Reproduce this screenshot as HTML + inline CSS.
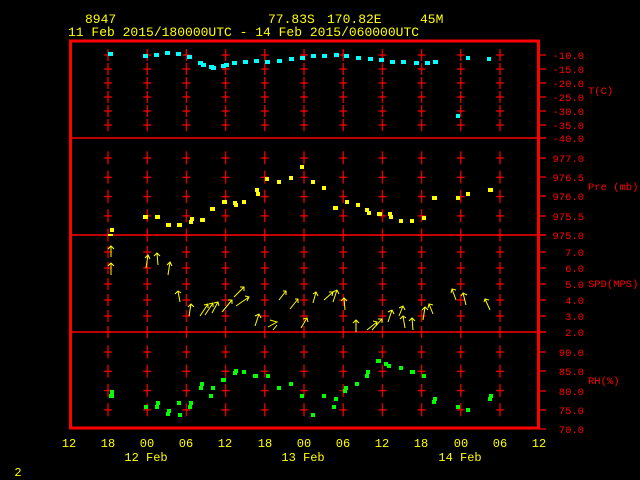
<!DOCTYPE html>
<html><head><meta charset="utf-8"><style>
html,body{margin:0;padding:0;background:#000;width:640px;height:480px;overflow:hidden}
svg{display:block}
text{font-family:"Liberation Mono","DejaVu Sans Mono",monospace}
</style></head><body>
<svg width="640" height="480" viewBox="0 0 640 480" xmlns="http://www.w3.org/2000/svg">
<defs>
<pattern id="pT" patternUnits="userSpaceOnUse" x="88.4" y="48" width="39.2" height="14"><path d="M19.6 1V13M15.6 7H23.6" stroke="#f00" stroke-width="1.2"/></pattern>
<pattern id="pP" patternUnits="userSpaceOnUse" x="88.4" y="148.35" width="39.2" height="19.3"><path d="M19.6 3V16M15.6 9.65H23.6" stroke="#f00" stroke-width="1.2"/></pattern>
<pattern id="pS" patternUnits="userSpaceOnUse" x="88.4" y="244" width="39.2" height="16"><path d="M19.6 2V14M15.6 8H23.6" stroke="#f00" stroke-width="1.2"/></pattern>
<pattern id="pR" patternUnits="userSpaceOnUse" x="88.4" y="342.35" width="39.2" height="19.3"><path d="M19.6 3V16M15.6 9.65H23.6" stroke="#f00" stroke-width="1.2"/></pattern>
</defs>
<rect x="88.4" y="48" width="431.2" height="84" fill="url(#pT)"/>
<rect x="88.4" y="148.35" width="431.2" height="96.5" fill="url(#pP)"/>
<rect x="88.4" y="244" width="431.2" height="96" fill="url(#pS)"/>
<rect x="88.4" y="342.35" width="431.2" height="77.2" fill="url(#pR)"/>
<g stroke="#f00" stroke-width="1.5">
<line x1="71" y1="138" x2="546" y2="138"/>
<line x1="71" y1="235" x2="546" y2="235"/>
<line x1="71" y1="332" x2="546" y2="332"/>
</g>
<g stroke="#f00" stroke-width="1.2">
<path d="M540 55H546M540 69H546M540 83H546M540 97H546M540 111H546M540 125H546M540 158H546M540 177H546M540 196H546M540 216H546M540 252H546M540 268H546M540 284H546M540 300H546M540 316H546M540 352H546M540 371H546M540 391H546M540 410H546M540 429H546"/>
</g>
<rect x="70.5" y="41" width="468" height="387" fill="none" stroke="#f00" stroke-width="3"/>
<g fill="#0ff">
<rect x="108" y="52" width="5" height="4"/><rect x="143" y="54" width="5" height="4"/><rect x="154" y="53" width="5" height="4"/><rect x="165" y="51" width="5" height="4"/><rect x="176" y="52" width="5" height="4"/><rect x="187" y="55" width="5" height="4"/><rect x="198" y="61" width="5" height="4"/><rect x="201" y="63" width="5" height="4"/><rect x="209" y="65" width="5" height="4"/><rect x="211" y="66" width="5" height="4"/><rect x="221" y="64" width="5" height="4"/><rect x="224" y="63" width="5" height="4"/><rect x="232" y="61" width="5" height="4"/><rect x="243" y="60" width="5" height="4"/><rect x="254" y="59" width="5" height="4"/><rect x="265" y="60" width="5" height="4"/><rect x="277" y="59" width="5" height="4"/><rect x="289" y="57" width="5" height="4"/><rect x="300" y="56" width="5" height="4"/><rect x="311" y="54" width="5" height="4"/><rect x="322" y="54" width="5" height="4"/><rect x="334" y="53" width="5" height="4"/><rect x="344" y="54" width="5" height="4"/><rect x="356" y="56" width="5" height="4"/><rect x="368" y="57" width="5" height="4"/><rect x="379" y="58" width="5" height="4"/><rect x="390" y="60" width="5" height="4"/><rect x="401" y="60" width="5" height="4"/><rect x="414" y="61" width="5" height="4"/><rect x="425" y="61" width="5" height="4"/><rect x="433" y="60" width="5" height="4"/><rect x="456" y="114" width="4" height="4"/><rect x="466" y="56" width="4" height="4"/><rect x="487" y="57" width="4" height="4"/>
</g>
<g fill="#ff0">
<rect x="110" y="228" width="4" height="4"/><rect x="108" y="234" width="5" height="2"/><rect x="143" y="215" width="5" height="4"/><rect x="155" y="215" width="5" height="4"/><rect x="166" y="223" width="5" height="4"/><rect x="177" y="223" width="5" height="4"/><rect x="189" y="220" width="4" height="4"/><rect x="190" y="217" width="4" height="4"/><rect x="200" y="218" width="5" height="4"/><rect x="210" y="207" width="5" height="4"/><rect x="222" y="200" width="5" height="4"/><rect x="233" y="201" width="4" height="4"/><rect x="234" y="203" width="4" height="4"/><rect x="242" y="200" width="4" height="4"/><rect x="255" y="188" width="4" height="4"/><rect x="256" y="192" width="4" height="4"/><rect x="265" y="177" width="4" height="4"/><rect x="277" y="180" width="4" height="4"/><rect x="289" y="176" width="4" height="4"/><rect x="300" y="165" width="4" height="4"/><rect x="311" y="180" width="4" height="4"/><rect x="322" y="186" width="4" height="4"/><rect x="333" y="206" width="5" height="4"/><rect x="345" y="200" width="4" height="4"/><rect x="356" y="203" width="4" height="4"/><rect x="365" y="208" width="4" height="4"/><rect x="367" y="211" width="4" height="4"/><rect x="377" y="212" width="5" height="4"/><rect x="388" y="212" width="4" height="4"/><rect x="389" y="215" width="4" height="4"/><rect x="399" y="219" width="4" height="4"/><rect x="410" y="219" width="4" height="4"/><rect x="422" y="216" width="4" height="4"/><rect x="432" y="196" width="5" height="4"/><rect x="456" y="196" width="4" height="4"/><rect x="466" y="192" width="4" height="4"/><rect x="488" y="188" width="5" height="4"/>
</g>
<g stroke="#ff0" stroke-width="1" fill="none">
<path d="M111 257V246M108 249L111 246L114 249"/>
<path d="M111 275V263M108 266L111 263L114 266"/>
<path d="M146 268L148 255M145 258L148 255L150 259"/>
<path d="M158 265L157 253M154 256L157 253L160 256"/>
<path d="M168 275L170 262M167 265L170 262L172 266"/>
<path d="M180 302L178 291M175 294L178 291L181 293"/>
<path d="M189 316L191 304M188 307L191 304L194 307"/>
<path d="M200 316L208 304M204 305L208 304L208 308"/>
<path d="M205 315L213 303M209 304L213 303L213 307"/>
<path d="M212 313L218 302M214 303L218 302L219 306"/>
<path d="M222 312L232 300M228 300L232 300L232 304"/>
<path d="M234 297L244 287M240 287L244 287L244 291"/>
<path d="M236 306L249 297M245 296L249 297L247 301"/>
<path d="M255 326L259 314M255 316L259 314L261 318"/>
<path d="M268 327L277 322L270 320M273 330L277 325"/>
<path d="M279 300L286 291M283 291L286 291L286 295"/>
<path d="M290 309L298 299M295 299L298 299L298 303"/>
<path d="M301 328L307 318M303 319L307 318L308 322"/>
<path d="M313 303L316 292M313 294L316 292L318 296"/>
<path d="M324 300L333 292M329 292L333 292L332 296"/>
<path d="M333 302L337 290M333 292L337 290L339 294"/>
<path d="M345 310L344 298M341 301L344 298L347 301"/>
<path d="M356 332V320M353 323L356 320L359 323"/>
<path d="M367 330L377 322M373 321L377 322L376 326"/>
<path d="M372 330L382 319M378 319L382 319L382 323"/>
<path d="M388 322L392 310M388 312L392 310L394 314"/>
<path d="M399 316L403 306M399 308L403 306L405 310"/>
<path d="M405 328L403 316M400 319L403 316L406 318"/>
<path d="M413 330L412 318M409 321L412 318L415 321"/>
<path d="M423 320L425 307M422 310L425 307L428 310"/>
<path d="M433 314L429 304M428 308L429 304L433 305"/>
<path d="M456 300L452 289M451 293L452 289L456 290"/>
<path d="M466 305L463 293M461 296L463 293L467 295"/>
<path d="M490 310L485 299M484 302L485 299L489 300"/>
</g>
<g fill="#0f0">
<rect x="109" y="394" width="5" height="4"/><rect x="110" y="390" width="4" height="4"/><rect x="144" y="405" width="4" height="4"/><rect x="155" y="405" width="4" height="4"/><rect x="156" y="401" width="4" height="4"/><rect x="166" y="412" width="4" height="4"/><rect x="167" y="409" width="4" height="4"/><rect x="177" y="401" width="4" height="4"/><rect x="178" y="413" width="4" height="4"/><rect x="188" y="405" width="4" height="4"/><rect x="189" y="401" width="4" height="4"/><rect x="199" y="386" width="4" height="4"/><rect x="200" y="382" width="4" height="4"/><rect x="209" y="394" width="4" height="4"/><rect x="211" y="386" width="4" height="4"/><rect x="221" y="378" width="5" height="4"/><rect x="233" y="371" width="4" height="4"/><rect x="234" y="369" width="4" height="4"/><rect x="242" y="370" width="4" height="4"/><rect x="253" y="374" width="5" height="4"/><rect x="266" y="374" width="4" height="4"/><rect x="277" y="386" width="4" height="4"/><rect x="289" y="382" width="4" height="4"/><rect x="300" y="394" width="4" height="4"/><rect x="311" y="413" width="4" height="4"/><rect x="322" y="394" width="4" height="4"/><rect x="332" y="405" width="4" height="4"/><rect x="334" y="397" width="4" height="4"/><rect x="343" y="389" width="4" height="4"/><rect x="344" y="386" width="4" height="4"/><rect x="355" y="382" width="4" height="4"/><rect x="365" y="374" width="4" height="4"/><rect x="366" y="370" width="4" height="4"/><rect x="376" y="359" width="5" height="4"/><rect x="384" y="362" width="4" height="4"/><rect x="387" y="364" width="4" height="4"/><rect x="399" y="366" width="4" height="4"/><rect x="410" y="370" width="5" height="4"/><rect x="422" y="374" width="4" height="4"/><rect x="432" y="400" width="4" height="4"/><rect x="433" y="397" width="4" height="4"/><rect x="456" y="405" width="4" height="4"/><rect x="466" y="408" width="4" height="4"/><rect x="488" y="397" width="4" height="4"/><rect x="489" y="394" width="4" height="4"/>
</g>
<g fill="#ff0" font-size="13">
<text x="85" y="23">8947</text>
<text x="268" y="23">77.83S</text>
<text x="327" y="23">170.82E</text>
<text x="420" y="23">45M</text>
<text x="68" y="36" xml:space="preserve">11 Feb 2015/180000UTC - 14 Feb 2015/060000UTC</text>
</g>
<g fill="#f00" font-size="10.5" text-anchor="end">
<text x="584" y="59">-10.0</text><text x="584" y="73">-15.0</text><text x="584" y="87">-20.0</text><text x="584" y="101">-25.0</text><text x="584" y="115">-30.0</text><text x="584" y="129">-35.0</text><text x="584" y="142">-40.0</text>
<text x="584" y="162">977.0</text><text x="584" y="181">976.5</text><text x="584" y="200">976.0</text><text x="584" y="220">975.5</text><text x="584" y="239">975.0</text>
<text x="584" y="256">7.0</text><text x="584" y="272">6.0</text><text x="584" y="288">5.0</text><text x="584" y="304">4.0</text><text x="584" y="320">3.0</text><text x="584" y="336">2.0</text>
<text x="584" y="356">90.0</text><text x="584" y="375">85.0</text><text x="584" y="395">80.0</text><text x="584" y="414">75.0</text><text x="584" y="433">70.0</text>
</g>
<g fill="#f00" font-size="10.5">
<text x="588" y="94">T(C)</text>
<text x="588" y="190">Pre (mb)</text>
<text x="588" y="287">SPD(MPS)</text>
<text x="588" y="384">RH(%)</text>
</g>
<g fill="#ff0" font-size="12" text-anchor="middle">
<text x="69" y="447">12</text><text x="108" y="447">18</text><text x="147" y="447">00</text><text x="186" y="447">06</text><text x="225" y="447">12</text><text x="265" y="447">18</text><text x="304" y="447">00</text><text x="343" y="447">06</text><text x="382" y="447">12</text><text x="421" y="447">18</text><text x="461" y="447">00</text><text x="500" y="447">06</text><text x="539" y="447">12</text>
<text x="146" y="461">12 Feb</text><text x="303" y="461">13 Feb</text><text x="460" y="461">14 Feb</text>
<text x="18" y="476">2</text>
</g>
</svg>
</body></html>
